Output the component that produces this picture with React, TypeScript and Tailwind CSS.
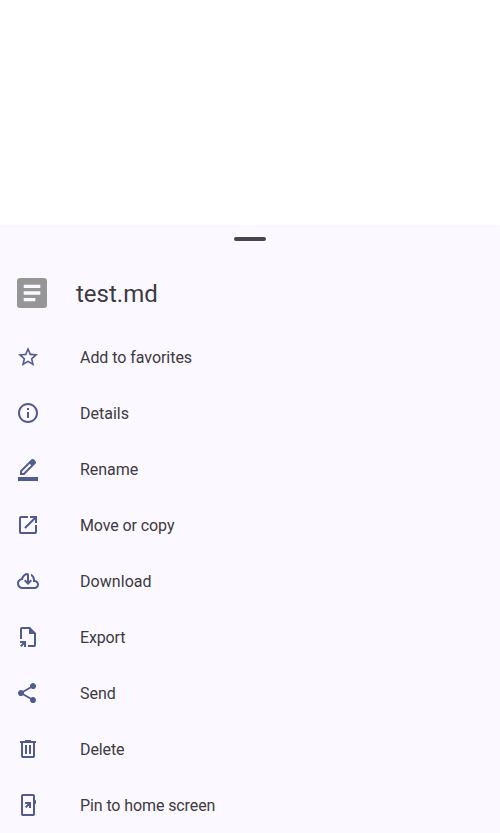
const items: { label: string; path: string; tracking: string }[] = [
  {
    label: 'Add to favorites',
    tracking: 'tracking-[-0.05px]',
    path: 'M22 9.24l-7.19-.62L12 2 9.19 8.63 2 9.24l5.46 4.73L5.82 21 12 17.27 18.18 21l-1.63-7.03L22 9.24zM12 15.4l-3.76 2.27 1-4.28-3.32-2.88 4.38-.38L12 6.1l1.71 4.04 4.38.38-3.32 2.88 1 4.28L12 15.4z',
  },
  {
    label: 'Details',
    tracking: 'tracking-normal',
    path: 'M11 7h2v2h-2zm0 4h2v6h-2zm1-9C6.48 2 2 6.48 2 12s4.48 10 10 10 10-4.48 10-10S17.52 2 12 2zm0 18c-4.41 0-8-3.59-8-8s3.59-8 8-8 8 3.59 8 8-3.59 8-8 8z',
  },
  {
    label: 'Rename',
    tracking: 'tracking-[-0.05px]',
    path: 'M2 24v-4h20v4zm2-6v-4.25L15.2 2.575q.275-.275.638-.425t.762-.15.775.15.675.45L19.425 4q.3.275.438.65T20 5.425q0 .375-.137.738t-.438.662L8.25 18zM6 16h1.4l7.8-7.775-1.425-1.425L6 14.6z',
  },
  {
    label: 'Move or copy',
    tracking: 'tracking-[-0.1px]',
    path: 'M5 21q-.825 0-1.412-.587T3 19V5q0-.825.588-1.412T5 3h7v2H5v14h14v-7h2v7q0 .825-.587 1.413T19 21zm4.7-5.3-1.4-1.4L17.6 5H14V3h7v7h-2V6.4z',
  },
  {
    label: 'Download',
    tracking: 'tracking-[0.06px]',
    path: 'M6.5 20q-2.275 0-3.887-1.575T1 14.575q0-1.95 1.175-3.475T5.25 9.15q.575-2.025 2.138-3.4T11 4.075q.825-.15 1.413.388T13 5.85v6.3l1.6-1.55L16 12l-4 4-4-4 1.4-1.4 1.6 1.55v-6.1q-1.9.35-2.95 1.838T7 11h-.5q-1.45 0-2.475 1.025T3 14.5t1.025 2.475T6.5 18h12q1.05 0 1.775-.725T21 15.5t-.725-1.775T18.5 13H17v-2q0-1.2-.55-2.237T15 7V4.675q1.85.875 2.925 2.588T19 11q1.725.2 2.863 1.488T23 15.5q0 1.875-1.312 3.188T18.5 20z',
  },
  {
    label: 'Export',
    tracking: 'tracking-[-0.15px]',
    path: 'M12 22v-2h6V9h-5V4H6v10H4V4q0-.825.588-1.412T6 2h8l6 6v12q0 .825-.587 1.413T18 22zM5.4 22.05 4 20.65 6.6 18H4v-2H10v6H8v-2.55z',
  },
  {
    label: 'Send',
    tracking: 'tracking-normal',
    path: 'M17 22q-1.25 0-2.125-.875T14 19q0-.15.075-.7L7.05 14.2q-.4.375-.925.588T5 15q-1.25 0-2.125-.875T2 12t.875-2.125T5 9q.6 0 1.125.213t.925.587l7.025-4.1q-.05-.175-.062-.337T14 5q0-1.25.875-2.125T17 2t2.125.875T20 5t-.875 2.125T17 8q-.6 0-1.125-.213T14.95 7.2l-7.025 4.1q.05.175.063.338T8 12t-.012.363-.063.337l7.025 4.1q.4-.375.925-.587T17 16q1.25 0 2.125.875T20 19t-.875 2.125T17 22',
  },
  {
    label: 'Delete',
    tracking: 'tracking-[-0.12px]',
    path: 'M7 21q-.825 0-1.412-.587T5 19V6H4V4h5V3h6v1h5v2h-1v13q0 .825-.587 1.413T17 21zM17 6H7v13h10zM9 17h2V8H9zm4 0h2V8h-2z',
  },
  {
    label: 'Pin to home screen',
    tracking: 'tracking-[-0.1px]',
    path: 'M7 23q-.825 0-1.412-.587T5 21V3q0-.825.588-1.412T7 1h10q.825 0 1.413.588T19 3v4q.45 0 .725.3T20 8v2q0 .4-.275.7T19 11v10q0 .825-.587 1.413T17 23zm0-2h10V3H7zM10.4 15.05 9 13.65 11.6 11H9V9h6v6h-2v-2.55z',
  },
];

function Icon({ path }: { path: string }) {
  return (
    <svg viewBox="0 0 24 24" className="size-6 shrink-0 fill-[#4f5b92]" aria-hidden="true">
      <path fillRule="evenodd" d={path} />
    </svg>
  );
}

function FileIcon() {
  return (
    <svg viewBox="0 0 30 30" className="size-[30px] shrink-0" aria-hidden="true">
      <rect width="30" height="30" rx="3.3" fill="#969696" />
      <path fill="#fbf8ff" d="M6.7 6.7h16.6V10H6.7zM6.7 13.3h16.6v3.4H6.7zM6.7 20h11.6v3.3H6.7z" />
    </svg>
  );
}

export default function App() {
  return (
    <div className="flex h-[833px] w-full flex-col overflow-hidden bg-white pt-[225px] font-[Roboto,sans-serif] text-[#3c3b3f]">
      <main className="flex flex-1 flex-col bg-[#fbf8ff]">
        <div className="mt-3 h-1 w-8 shrink-0 self-center rounded-full bg-[#48454e]" />
        <header className="mt-5 mb-1 flex h-16 shrink-0 items-center gap-[29px] pl-[17px]">
          <FileIcon />
          <h1 className="pt-0.5 text-2xl leading-8">test.md</h1>
        </header>
        <ul className="flex flex-col">
          {items.map(({ label, path, tracking }) => (
            <li key={label} className="flex h-14 shrink-0 items-center gap-10 pl-4">
              <Icon path={path} />
              <span className={`pt-0.5 text-base leading-6 ${tracking}`}>{label}</span>
            </li>
          ))}
        </ul>
      </main>
    </div>
  );
}
